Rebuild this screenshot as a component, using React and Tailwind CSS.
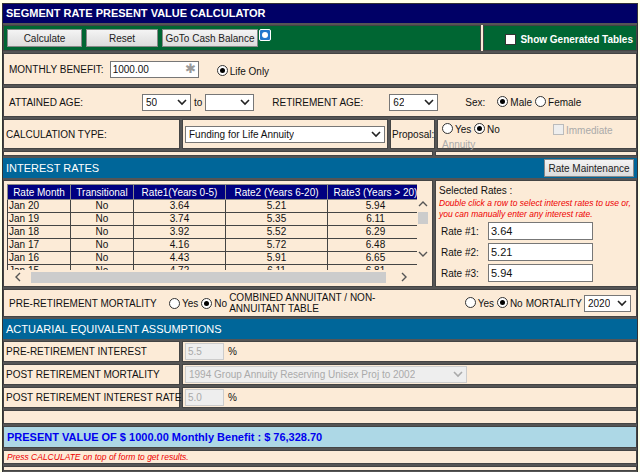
import React from "react";

const cell = "border border-[#444] bg-[#fcebd7]";
const Radio = ({ on }) => (
  <span className={`inline-block w-[11px] h-[11px] rounded-full border border-[#333] bg-white relative mr-[2px] align-[-1px]`}>
    {on && <span className="absolute left-[2px] top-[2px] w-[5px] h-[5px] rounded-full bg-black" />}
  </span>
);
const Sel = ({ w, v, dis }) => (
  <span className={`inline-flex items-center justify-between h-[17px] ${w} border ${dis ? "border-[#ccc] text-[#aaa] bg-[#eee]" : "border-[#777] bg-white"} px-[3px]`}>
    <span className="truncate">{v}</span>
    <svg width="10" height="7" viewBox="0 0 10 7" className="shrink-0"><path d="M1 1l4 4 4-4" fill="none" stroke={dis ? "#aaa" : "#222"} strokeWidth="1.6" /></svg>
  </span>
);
const rows = [
  ["Jan 20", "No", "3.64", "5.21", "5.94"],
  ["Jan 19", "No", "3.74", "5.35", "6.11"],
  ["Jan 18", "No", "3.92", "5.52", "6.29"],
  ["Jan 17", "No", "4.16", "5.72", "6.48"],
  ["Jan 16", "No", "4.43", "5.91", "6.65"],
  ["Jan 15", "No", "4.72", "6.11", "6.81"],
];
const Btn = ({ w, children }) => (
  <span className={`${w} h-[18px] flex items-center justify-center whitespace-nowrap bg-gradient-to-b from-[#f4f4f4] to-[#dcdcdc] border border-[#888] text-[#222]`}>{children}</span>
);

export default function App() {
  return (
    <div className="w-[640px] h-[472px] bg-[#ffffe8] pt-[3px] px-[2px] overflow-hidden text-[10px] text-[#111] whitespace-nowrap" style={{ fontFamily: '"Liberation Sans", Arial, sans-serif' }}>
      <div className="border border-[#333] bg-[#555] flex flex-col gap-[2px]">
        <div className="h-[19px] bg-[#000066] text-white font-bold text-[11px] flex items-center px-[3px]">SEGMENT RATE PRESENT VALUE CALCULATOR</div>
        <div className="flex gap-[2px] h-[26px] bg-[#fcebd7]">
          <div className="flex-1 bg-[#006633] border border-[#444] flex items-center gap-[4px] px-[3px]">
            <Btn w="w-[75px]">Calculate</Btn>
            <Btn w="w-[72px]">Reset</Btn>
            <Btn w="w-[96px]">GoTo Cash Balance</Btn>
            <span className="w-[12px] h-[12px] -mt-[6px] -ml-[3px] bg-[#2277cc] border border-white rounded-[2px] flex items-center justify-center"><span className="w-[6px] h-[6px] rounded-full bg-white" /></span>
          </div>
          <div className="w-[154px] bg-[#006633] border border-[#444] flex items-center justify-end pr-[3px] gap-[4px] text-white font-bold pt-[2px]">
            <span className="w-[11px] h-[11px] bg-white border border-[#333]" />Show Generated Tables
          </div>
        </div>
        <div className={`${cell} h-[32px] flex items-center px-[5px]`}>
          <span>MONTHLY BENEFIT:</span>
          <span className="ml-[6px] w-[89px] h-[17px] border border-[#777] bg-white flex items-center justify-between px-[2px]">1000.00<span className="text-[#999] text-[13px]">✱</span></span>
          <span className="ml-[18px] pt-[4px]"><Radio on />Life Only</span>
        </div>
        <div className={`${cell} h-[30px] flex items-center px-[5px]`}>
          <span className="w-[133px]">ATTAINED AGE:</span>
          <Sel w="w-[49px]" v="50" /><span className="mx-[3px]">to</span><Sel w="w-[49px]" v="" />
          <span className="ml-[18px] w-[117px]">RETIREMENT AGE:</span>
          <Sel w="w-[49px]" v="62" />
          <span className="ml-[27px] mr-[12px]">Sex:</span>
          <span><Radio on />Male</span><span className="ml-[3px]"><Radio />Female</span>
        </div>
        <div className="flex gap-[2px] h-[30px] bg-[#555]">
          <div className={`${cell} w-[177px] flex items-center px-[2px]`}>CALCULATION TYPE:</div>
          <div className={`${cell} w-[206px] flex items-center px-[2px]`}><Sel w="w-[200px]" v="Funding for Life Annuity" /></div>
          <div className={`${cell} w-[45px] flex items-center px-[1px]`}>Proposal:</div>
          <div className={`${cell} flex-1 px-[4px] pt-[2px] relative`}>
            <div><Radio />Yes <Radio on />No</div>
            <div className="text-[#aaa]">Annuity</div>
            <div className="absolute left-[115px] top-[3px] text-[#aaa]"><span className="inline-block w-[11px] h-[11px] border border-[#bbb] bg-[#eee] mr-[2px] align-[-1px]" />Immediate</div>
          </div>
        </div>
        <div className="flex gap-[2px] h-[5px]"><div className={`${cell} w-[430px]`} /><div className={`${cell} flex-1`} /></div>
        <div className="h-[20px] bg-[#006699] flex items-center justify-between px-[3px] text-white text-[11px]">
          INTEREST RATES
          <span className="text-[10px]"><Btn w="w-[90px]">Rate Maintenance</Btn></span>
        </div>
        <div className="flex gap-[2px] h-[107px]">
          <div className={`${cell} w-[430px] p-[3px] pb-0 flex flex-col`}>
            <div className="flex h-[86px]">
              <div className="w-[416px] overflow-hidden">
                <table className="border-collapse w-[416px] table-fixed">
                  <thead>
                    <tr className="bg-[#000080] text-white h-[15px]">
                      {["Rate Month", "Transitional", "Rate1(Years 0-5)", "Rate2 (Years 6-20)", "Rate3 (Years > 20)"].map((h, i) => (
                        <th key={i} className={`font-normal border border-[#888] whitespace-nowrap overflow-hidden leading-[13px] ${["w-[63px]", "w-[63px]", "w-[92px]", "w-[102px]", "w-[96px]"][i]}`}>{h}</th>
                      ))}
                    </tr>
                  </thead>
                  <tbody>
                    {rows.map((r, i) => (
                      <tr key={i} className="h-[13px]">
                        {r.map((c, j) => (
                          <td key={j} className={`border border-[#444] leading-[12px] ${j === 0 ? "text-left pl-[1px]" : "text-center"}`}>{c}</td>
                        ))}
                      </tr>
                    ))}
                  </tbody>
                </table>
              </div>
              <div className="w-[12px] flex flex-col items-center">
                <svg width="10" height="8" viewBox="0 0 10 8" className="mt-[16px]"><path d="M1 6l4-4 4 4" fill="none" stroke="#555" strokeWidth="1.4" /></svg>
                <div className="w-[10px] h-[12px] bg-[#ccc] mt-[4px]" />
                <svg width="10" height="8" viewBox="0 0 10 8" className="mt-[26px]"><path d="M1 2l4 4 4-4" fill="none" stroke="#555" strokeWidth="1.4" /></svg>
              </div>
            </div>
            <div className="h-[14px] flex items-center w-[416px]">
              <svg width="10" height="10" viewBox="0 0 10 10" className="ml-[6px]"><path d="M7 1L3 5l4 4" fill="none" stroke="#555" strokeWidth="1.4" /></svg>
              <div className="ml-[8px] w-[355px] h-[11px] bg-[#ccc]" />
              <svg width="10" height="10" viewBox="0 0 10 10" className="ml-[13px]"><path d="M3 1l4 4-4 4" fill="none" stroke="#555" strokeWidth="1.4" /></svg>
            </div>
          </div>
          <div className={`${cell} flex-1 px-[3px] pt-[2px]`}>
            <div>Selected Rates :</div>
            <div className="text-[#e00] italic text-[8.5px] leading-[11px] whitespace-normal">Double click a row to select interest rates to use or, you can manually enter any interest rate.</div>
            {["3.64", "5.21", "5.94"].map((v, i) => (
              <div key={i} className="flex items-center h-[20px] mt-[1px] first:mt-[4px]">
                <span className="w-[49px] pl-[2px]">Rate #{i + 1}:</span>
                <span className="w-[105px] h-[18px] border border-[#777] bg-white px-[2px] text-[11px] leading-[16px]">{v}</span>
              </div>
            ))}
          </div>
        </div>
        <div className={`${cell} h-[28px] flex items-center px-[5px]`}>
          <span className="w-[160px]">PRE-RETIREMENT MORTALITY</span>
          <Radio /><span className="mr-[3px]">Yes</span><Radio on /><span>No</span>
          <span className="ml-[2px] w-[200px] leading-[11px] whitespace-normal">COMBINED ANNUITANT / NON-ANNUITANT TABLE</span>
          <span className="ml-auto"><Radio />Yes <Radio on />No</span>
          <span className="ml-[3px] mr-[2px]">MORTALITY</span>
          <Sel w="w-[47px]" v="2020" />
        </div>
        <div className="h-[20px] bg-[#006699] flex items-center px-[3px] text-white text-[11px]">ACTUARIAL EQUIVALENT ASSUMPTIONS</div>
        {[["PRE-RETIREMENT INTEREST", "5.5"], ["POST RETIREMENT MORTALITY", null], ["POST RETIREMENT INTEREST RATE", "5.0"]].map(([l, v], i) => (
          <div key={i} className="flex gap-[2px] h-[21px]">
            <div className={`${cell} w-[177px] flex items-center px-[2px]`}>{l}</div>
            <div className={`${cell} flex-1 flex items-center px-[2px]`}>
              {v ? (<><span className="w-[39px] h-[17px] border border-[#ccc] bg-[#eee] text-[#aaa] px-[2px] leading-[15px]">{v}</span><span className="ml-[4px]">%</span></>) : (<Sel dis w="w-[282px]" v="1994 Group Annuity Reserving Unisex Proj to 2002" />)}
            </div>
          </div>
        ))}
        <div className={`${cell} h-[14px]`} />
        <div className="h-[22px] bg-[#add8e6] border border-[#444] flex items-center px-[3px] text-[#0000ee] font-bold text-[11px]">PRESENT VALUE OF $ 1000.00 Monthly Benefit : $ 76,328.70</div>
        <div className={`${cell} h-[14px] flex items-center px-[3px] text-[#e00] italic text-[8.5px]`}>Press CALCULATE on top of form to get results.</div>
        <div className={`${cell} h-[5px]`} />
        <div className={`${cell} h-[10px]`} />
      </div>
    </div>
  );
}
